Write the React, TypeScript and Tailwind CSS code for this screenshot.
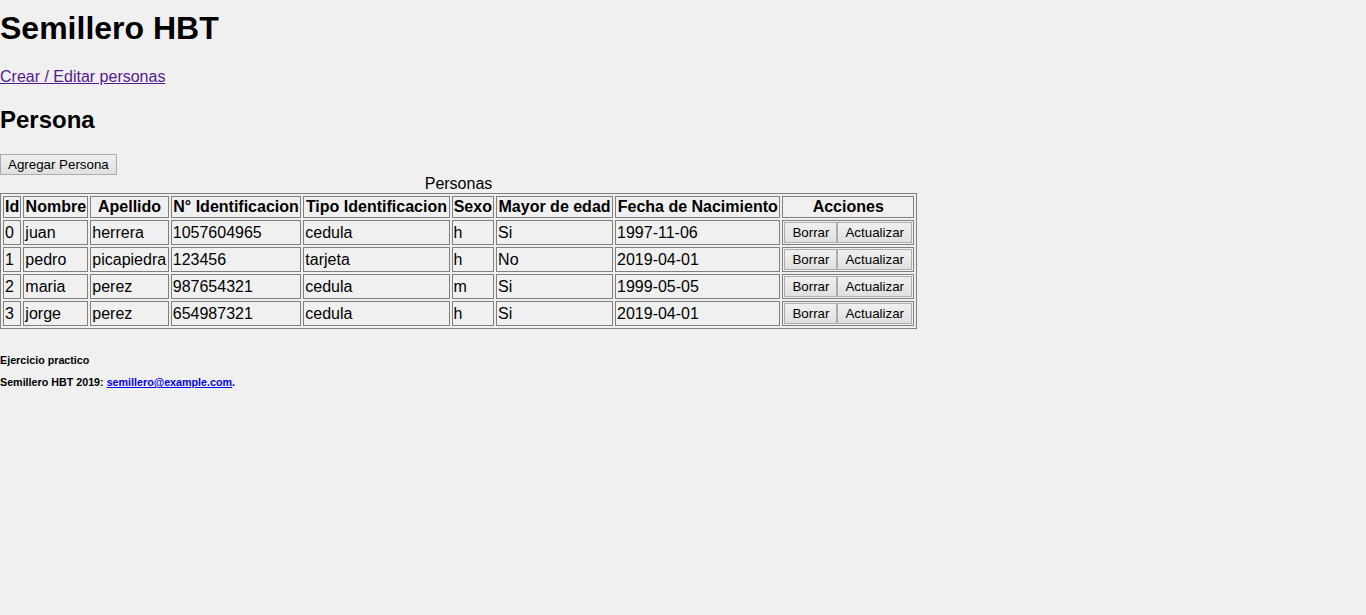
const personas = [
  { id: 0, nombre: "juan", apellido: "herrera", num: "1057604965", tipo: "cedula", sexo: "h", mayor: "Si", fecha: "1997-11-06" },
  { id: 1, nombre: "pedro", apellido: "picapiedra", num: "123456", tipo: "tarjeta", sexo: "h", mayor: "No", fecha: "2019-04-01" },
  { id: 2, nombre: "maria", apellido: "perez", num: "987654321", tipo: "cedula", sexo: "m", mayor: "Si", fecha: "1999-05-05" },
  { id: 3, nombre: "jorge", apellido: "perez", num: "654987321", tipo: "cedula", sexo: "h", mayor: "Si", fecha: "2019-04-01" },
]

const th = "border border-[#808080] px-px py-px font-bold text-center whitespace-nowrap leading-[18px]"
const td = "border border-[#808080] px-px py-px text-left whitespace-nowrap leading-[18px]"
const btn = "border border-[#adadad] bg-gradient-to-b from-[#f0f0f0] to-[#e0e0e0] text-[13.33px] leading-[15px] h-[21px] px-[7px] text-black"

const App = () => {
  return (
    <div className="min-h-[615px] bg-[#f0f0f0] text-black font-['Liberation_Sans',Arial,sans-serif] text-[16px] leading-[1.15]">
      <h1 className="text-[32px] font-bold leading-[37px] pt-[10px]">Semillero HBT</h1>
      <p className="mt-[21px] leading-[18px]">
        <a href="#" className="text-[#551a8b] underline">Crear / Editar personas</a>
      </p>
      <h2 className="text-[24px] font-bold leading-[28px] mt-[20px]">Persona</h2>
      <div className="mt-[20px] flex">
        <button className="border border-[#adadad] bg-gradient-to-b from-[#f0f0f0] to-[#e0e0e0] text-[13.33px] leading-[15px] px-[7px] h-[21px]">
          Agregar Persona
        </button>
      </div>
      <table className="border-separate border-spacing-[2px] border border-[#808080] w-[917px]">
        <caption className="leading-[18px] text-center">Personas</caption>
        <thead>
          <tr>
            <th className={th}>Id</th>
            <th className={th}>Nombre</th>
            <th className={th}>Apellido</th>
            <th className={th}>N° Identificacion</th>
            <th className={th}>Tipo Identificacion</th>
            <th className={th}>Sexo</th>
            <th className={th}>Mayor de edad</th>
            <th className={th}>Fecha de Nacimiento</th>
            <th className={th + " w-[128px]"}>Acciones</th>
          </tr>
        </thead>
        <tbody>
          {personas.map((p) => (
            <tr key={p.id}>
              <td className={td}>{p.id}</td>
              <td className={td}>{p.nombre}</td>
              <td className={td}>{p.apellido}</td>
              <td className={td}>{p.num}</td>
              <td className={td}>{p.tipo}</td>
              <td className={td}>{p.sexo}</td>
              <td className={td}>{p.mayor}</td>
              <td className={td}>{p.fecha}</td>
              <td className={td}>
                <div className="flex">
                  <button className={btn}>Borrar</button>
                  <button className={btn}>Actualizar</button>
                </div>
              </td>
            </tr>
          ))}
        </tbody>
      </table>
      <footer className="text-[10.72px] font-bold leading-[12px]">
        <h6 className="mt-[25px]">Ejercicio practico</h6>
        <p className="mt-[10px]">
          Semillero HBT 2019: <a href="#" className="text-[#0000ee] underline">semillero@example.com</a>.
        </p>
      </footer>
    </div>
  )
}

export default App
